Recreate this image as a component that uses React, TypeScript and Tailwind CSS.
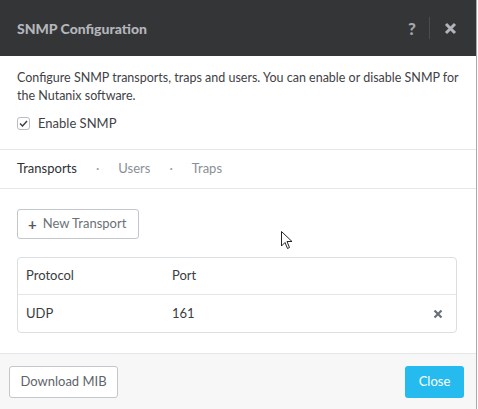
import React from "react";

export default function App() {
  return (
    <div className="w-[478px] h-[409px] bg-white relative overflow-hidden" style={{ fontFamily: 'Lato, "Liberation Sans", sans-serif' }}>
      <div className="w-[477px] h-[409px] border-r border-[#a9a9a9] flex flex-col bg-white">
        {/* Header */}
        <div className="h-[56px] bg-[#343537] flex items-center pl-[17px] pr-[17px] shrink-0">
          <div className="text-[14px] font-black text-[#b3b6bb] flex-1">SNMP Configuration</div>
          <div className="text-[17px] font-black text-[#a4a7ab] w-[12px] text-center leading-none">?</div>
          <div className="w-px h-[22px] bg-[#4a4b4e] ml-[11px] mr-[14px]"></div>
          <svg width="13" height="13" viewBox="0 0 13 13" className="mr-[2px]">
            <path d="M2 2 L11 11 M11 2 L2 11" stroke="#b1b4b9" strokeWidth="3" strokeLinecap="butt" />
          </svg>
        </div>
        {/* Body */}
        <div className="px-[17px] pt-[13px] text-[12.5px] text-[#3f4246] leading-[18px]">
          <p className="whitespace-nowrap">Configure SNMP transports, traps and users. You can enable or disable SNMP for<br />the Nutanix software.</p>
          <div className="flex items-center mt-[9px] h-[18px]">
            <div className="w-[13px] h-[13px] border border-[#b9bcc0] rounded-[3px] flex items-center justify-center">
              <svg width="9" height="7" viewBox="0 0 9 7">
                <path d="M1 3.5 L3.5 6 L8 1" stroke="#3a3d41" strokeWidth="1.4" fill="none" />
              </svg>
            </div>
            <span className="ml-[8px] text-[13px] text-[#3f4246]">Enable SNMP</span>
          </div>
        </div>
        <div className="h-px bg-[#e6e7e8] mt-[17px]"></div>
        <div className="h-[38px] flex items-center px-[17px] text-[13px]">
          <span className="text-[#2e3135]">Transports</span>
          <span className="text-[#9ea2a7] ml-[19px] mr-[19px]">·</span>
          <span className="text-[#8a8f95]">Users</span>
          <span className="text-[#9ea2a7] ml-[19px] mr-[19px]">·</span>
          <span className="text-[#8a8f95]">Traps</span>
        </div>
        <div className="h-px bg-[#e6e7e8]"></div>
        <div className="px-[17px] pt-[20px] flex-1">
          <div className="w-[122px] h-[30px] border border-[#c3c7cc] rounded-[3px] flex items-center pl-[10px] text-[13px] text-[#6c7177]">
            <span className="text-[15px] font-bold leading-none mr-[6px] text-[#55595e]">+</span>
            <span>New Transport</span>
          </div>
          <div className="mt-[18px] w-[440px] border border-[#dcdee0] rounded-[4px] text-[13px] text-[#3a3d41]">
            <div className="h-[37px] flex items-center px-[8px] border-b border-[#e3e5e7]">
              <span className="w-[146px]">Protocol</span>
              <span>Port</span>
            </div>
            <div className="h-[37px] flex items-center px-[8px]">
              <span className="w-[146px]">UDP</span>
              <span className="flex-1">161</span>
              <svg width="10" height="10" viewBox="0 0 10 10" className="mr-[5px]">
                <path d="M1.5 1.5 L8.5 8.5 M8.5 1.5 L1.5 8.5" stroke="#6a7078" strokeWidth="2.2" />
              </svg>
            </div>
          </div>
        </div>
        {/* Footer */}
        <div className="h-[56px] bg-[#f7f7f7] border-t border-[#e6e7e8] flex items-center justify-between pl-[9px] pr-[12px] shrink-0">
          <div className="w-[109px] h-[32px] border border-[#c3c7cc] rounded-[3px] bg-white flex items-center justify-center text-[13px] text-[#5f646a]">Download MIB</div>
          <div className="w-[59px] h-[32px] rounded-[3px] bg-[#26bbee] flex items-center justify-center text-[13px] text-white">Close</div>
        </div>
      </div>
      {/* mouse cursor */}
      <svg width="14" height="20" viewBox="0 0 14 20" className="absolute left-[281px] top-[231px]">
        <path d="M0.5 0.5 L0.5 15 L4 11.5 L6.5 17.5 L8.5 16.5 L6 10.5 L11 10.5 Z" fill="white" stroke="#222" strokeWidth="1" />
      </svg>
    </div>
  );
}
